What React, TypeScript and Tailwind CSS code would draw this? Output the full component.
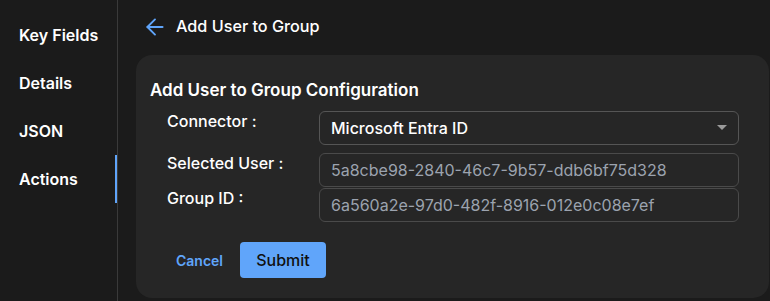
import { ArrowLeft } from 'lucide-react';

const NAV = ['Key Fields', 'Details', 'JSON', 'Actions'];

const FIELDS = [
  { label: 'Selected User :', value: '5a8cbe98-2840-46c7-9b57-ddb6bf75d328' },
  { label: 'Group ID :', value: '6a560a2e-97d0-482f-8916-012e0c08e7ef' },
];

export default function App() {
  return (
    <div
      className="flex h-[301px] w-[770px] overflow-hidden bg-[#1b1b1b] text-white"
      style={{ fontFamily: 'Inter, "Noto Sans", sans-serif' }}
    >
      <nav className="w-[118px] shrink-0 border-r border-[#3a3a3a] pt-[11px]">
        {NAV.map((n) => (
          <div
            key={n}
            className={
              'flex h-[48px] items-center pl-[19px] text-[16px] font-semibold ' +
              (n === 'Actions' ? 'border-r-2 border-[#60a5fa]' : '')
            }
          >
            {n}
          </div>
        ))}
      </nav>

      <main className="flex-1 pl-[18px] pr-[1px]">
        <div className="flex h-[55px] items-center gap-[8px] pl-[6px] pb-[2px]">
          <ArrowLeft size={26} strokeWidth={1.75} className="text-[#60a5fa]" />
          <span className="text-[16.2px] font-medium">Add User to Group</span>
        </div>

        <section className="rounded-[16px] bg-[#262626] pl-[14px] pr-[30px] pt-[24px] pb-[20px]">
          <h2 className="text-[17px] font-semibold leading-[22px]">Add User to Group Configuration</h2>

          <div className="mt-[10px] pl-[17px]">
            <div className="flex items-start">
              <label className="w-[152px] shrink-0 text-[16px] font-medium leading-[20px]">
                Connector :
              </label>
              <div className="flex h-[34px] flex-1 items-center justify-between rounded-[6px] border border-[#555] pl-[11px] pr-[10px]">
                <span className="text-[16px] font-medium">Microsoft Entra ID</span>
                <svg width="10" height="6" viewBox="0 0 10 6" className="mr-[1px]">
                  <path d="M0 0h10L5 5z" fill="#9a9a9a" />
                </svg>
              </div>
            </div>

            <div className="mt-[8px] flex flex-col gap-[1px]">
              {FIELDS.map((f) => (
                <div key={f.label} className="flex items-start">
                  <label className="w-[152px] shrink-0 text-[16px] font-medium leading-[20px]">
                    {f.label}
                  </label>
                  <div className="flex h-[34px] flex-1 items-center rounded-[6px] border border-[#4a4a4a] pl-[11px] text-[16px] text-[#9ca3af]">
                    {f.value}
                  </div>
                </div>
              ))}
            </div>

            <div className="mt-[20px] flex items-center gap-[17px]">
              <button className="pl-[9px] text-[14px] font-semibold text-[#60a5fa]">Cancel</button>
              <button className="h-[36px] w-[86px] rounded-[4px] bg-[#60a5fa] text-[16px] font-medium text-[#111]">
                Submit
              </button>
            </div>
          </div>
        </section>
      </main>
    </div>
  );
}
